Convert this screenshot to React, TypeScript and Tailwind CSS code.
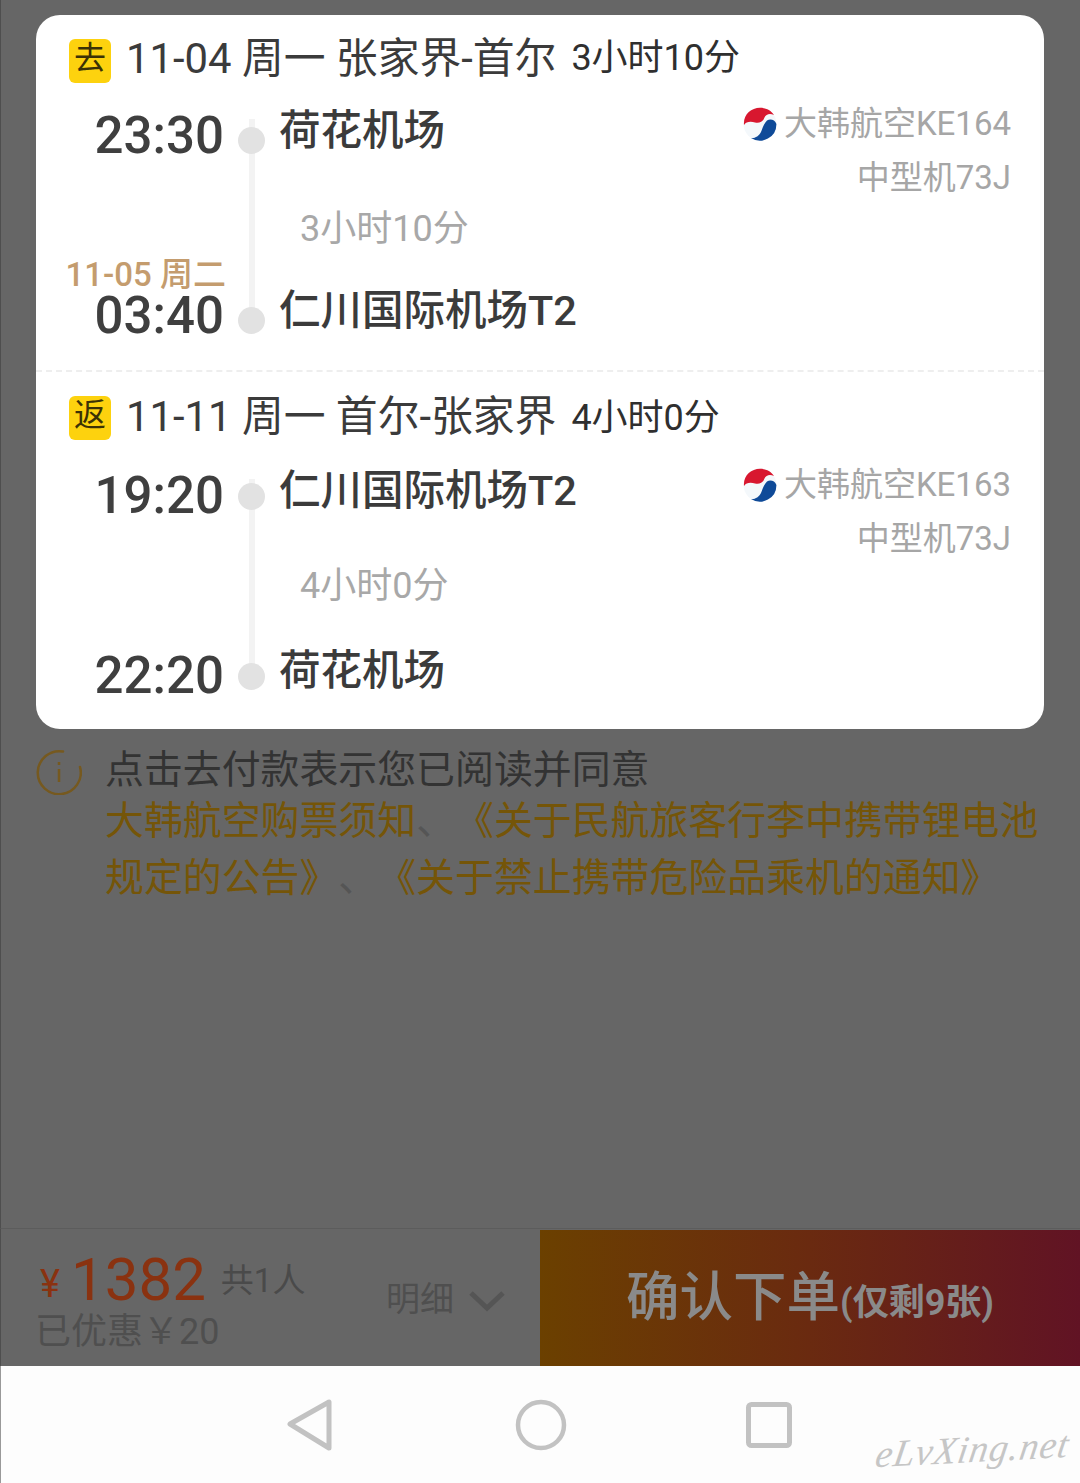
import React from "react";

function Logo() {
  return (
    <svg width="34" height="34" viewBox="0 0 34 34" className="mr-[7px] shrink-0">
      <circle cx="17" cy="17" r="16.5" fill="#f4f8fb" />
      <path d="M1 18 C0 8 8 0.8 17 0.8 C23 0.8 28 3 31 8 C27 6 23 7 21.5 10.5 C20 15 16 16.5 12 15.5 C7 14 3 15 1 18 Z" fill="#d8172f" />
      <path d="M33.4 17 A16.5 16.5 0 0 1 8 31 C12 31.5 16 29 18 25 C20 20 21 16.5 24 13.5 C27 11.5 32 12.5 33.4 17 Z" fill="#0f4a98" />
    </svg>
  );
}

type SegmentProps = {
  tag: string;
  head: string;
  headDuration: string;
  depart: string;
  arrive: string;
  from: string;
  to: string;
  duration: string;
  flight: string;
  nextDay?: string;
  rowGap: string;
  midPad: string;
  pad: string;
  bottom: string;
  dot: string;
  airTop: string;
  headShift: string;
  durShift: string;
};

function Dot({ shift }: { shift: string }) {
  return <div className={`relative z-10 h-[27px] w-[27px] rounded-full bg-[#e2e2e2] ${shift}`} />;
}

function Segment(p: SegmentProps) {
  return (
    <section className={`${p.pad} ${p.bottom}`}>
      <div className={`flex h-[44px] items-center ${p.rowGap}`}>
        <span className="ml-[33px] flex h-[44px] w-[42px] items-center justify-center rounded-[6px] bg-[#fdd20e] pb-[6px] text-[32px] text-[#3c3205]">
          {p.tag}
        </span>
        <span className={`ml-[15px] whitespace-nowrap text-[41.8px] leading-[44px] text-[#3b3b3b] ${p.headShift}`}>{p.head}</span>
        <span className={`ml-[15px] whitespace-nowrap text-[36px] leading-[44px] text-[#2f2f2f] ${p.durShift}`}>{p.headDuration}</span>
      </div>
      <div className="flex">
        <div className="relative flex-1">
          <div className="absolute bottom-[20px] left-[213px] top-[11px] w-[6px] bg-[#f3f3f3]" />
          <div className="flex h-[56px] items-center">
            <span className="w-[188px] pb-[2px] text-right text-[51px] font-medium leading-none text-[#3f3f3f]">{p.depart}</span>
            <div className="ml-[14px] w-[27px]"><Dot shift={p.dot} /></div>
            <span className="ml-[14px] whitespace-nowrap pb-[10px] text-[41.5px] font-medium leading-none text-[#3b3b3b]">{p.from}</span>
          </div>
          <div className="flex h-[124px]">
            <div className="flex w-[190px] flex-col justify-end">
              {p.nextDay && <span className="-mb-[1px] whitespace-nowrap text-right text-[33px] font-medium leading-[28px] text-[#c49c6e]">{p.nextDay}</span>}
            </div>
            <div className={`ml-[74px] flex items-center text-[36px] leading-none text-[#a8a8a8] ${p.midPad}`}>{p.duration}</div>
          </div>
          <div className="flex h-[56px] items-center">
            <span className="w-[188px] pb-[2px] text-right text-[51px] font-medium leading-none text-[#3f3f3f]">{p.arrive}</span>
            <div className="ml-[14px] w-[27px]"><Dot shift={p.dot} /></div>
            <span className="ml-[14px] whitespace-nowrap pb-[10px] text-[41.5px] font-medium leading-none text-[#3b3b3b]">{p.to}</span>
          </div>
        </div>
        <div className="flex flex-col items-end pr-[33px] text-[33px] leading-[54px] text-[#a6a6a6]">
          <div className={`flex items-center whitespace-nowrap ${p.airTop}`}>
            <Logo />
            {p.flight}
          </div>
          <div className="whitespace-nowrap">中型机73J</div>
        </div>
      </div>
    </section>
  );
}

export default function App() {
  return (
    <div className="flex h-[1483px] w-[1080px] flex-col overflow-hidden bg-[#666666] font-[Roboto,'Noto_Sans_CJK_SC',sans-serif]">
      <main className="flex-1 border-l border-[#4e4e4e] pl-[35px] pr-[36px] pt-[15px]">
        <div className="rounded-[24px] bg-white">
          <Segment
            tag="去"
            head="11-04 周一 张家界-首尔"
            headDuration="3小时10分"
            depart="23:30"
            arrive="03:40"
            from="荷花机场"
            to="仁川国际机场T2"
            duration="3小时10分"
            flight="大韩航空KE164"
            nextDay="11-05 周二"
            pad="pt-[24px]"
            rowGap="mb-[25px]"
            midPad="pt-[6px]"
            dot="translate-y-[4px]"
            airTop="-mt-[11px]"
            headShift="-translate-y-[2px]"
            durShift="-translate-y-[3px]"
            bottom="pb-[26px] border-b-2 border-dashed border-[#eeeeee]"
          />
          <Segment
            tag="返"
            head="11-11 周一 首尔-张家界"
            headDuration="4小时0分"
            depart="19:20"
            arrive="22:20"
            from="仁川国际机场T2"
            to="荷花机场"
            duration="4小时0分"
            flight="大韩航空KE163"
            pad="pt-[24px]"
            rowGap="mb-[28px]"
            midPad=""
            dot="translate-y-[0px]"
            airTop="-mt-[10px]"
            headShift="-translate-y-[1px]"
            durShift="translate-y-[0px]"
            bottom="pb-[25px]"
          />
        </div>
        <div className="mt-[12px] flex">
          <svg width="46" height="46" viewBox="0 0 46 46" className="mt-[8px] shrink-0" fill="none" stroke="#76591f" strokeWidth="2.5">
            <path d="M27 2.5 A21.5 21.5 0 1 0 44 18" strokeLinecap="round" />
            <line x1="23" y1="20" x2="23" y2="33" />
            <line x1="23" y1="13" x2="23" y2="16" />
          </svg>
          <div className="ml-[23px] whitespace-nowrap text-[38.9px] leading-[57px] text-[#755508] [text-spacing-trim:space-all]">
            <div className="-mb-[6px] text-[#333333]">点击去付款表示您已阅读并同意</div>
            <div>大韩航空购票须知<span className="text-[#555555]">、</span>《关于民航旅客行李中携带锂电池</div>
            <div>规定的公告》<span className="text-[#555555]">、</span>《关于禁止携带危险品乘机的通知》</div>
          </div>
        </div>
      </main>

      <footer className="flex h-[138px] shrink-0 border-l border-t border-l-[#4e4e4e] border-t-[#5c5c5c]">
        <div className="flex w-[539px] items-start pl-[35px]">
          <div className="w-[350px]">
            <div className="flex h-[86px] items-end text-[#8a3210]">
              <span className="mb-[12px] ml-[4px] text-[38px] leading-none">¥</span>
              <span className="ml-[11px] text-[60px] leading-[70px]">1382</span>
              <span className="mb-[18px] ml-[15px] text-[33px] leading-none text-[#4a4a4a]">共1人</span>
            </div>
            <div className="-ml-[1px] -mt-[6px] whitespace-nowrap text-[36px] leading-[46px] text-[#4f4f4f]">已优惠￥20</div>
          </div>
          <div className="mt-[50px] flex items-center text-[34px] leading-[40px] text-[#4f4f4f]">
            明细
            <svg width="38" height="22" viewBox="0 0 38 22" className="ml-[14px] mt-[3px]" fill="none" stroke="#555555" strokeWidth="5">
              <path d="M3 3 L19 18 L35 3" />
            </svg>
          </div>
        </div>
        <button className="mt-[1px] flex flex-1 items-center justify-center bg-[linear-gradient(90deg,#6b4000,#6a2a10_50%,#611324)] text-[#8a8a8a]">
          <span className="text-[53.5px] font-medium leading-none">确认下单</span>
          <span className="mt-[10px] whitespace-nowrap text-[36px] font-bold leading-none">(仅剩9张)</span>
        </button>
      </footer>

      <nav className="relative flex h-[117px] shrink-0 items-center border-l border-[#999999] bg-[#fdfdfd]">
        <div className="ml-[286px] flex items-center">
          <svg width="46" height="54" viewBox="0 0 46 54" fill="none" stroke="#c2c2c2" strokeWidth="5" strokeLinejoin="round">
            <path d="M42 4 V50 L3 26 Z" />
          </svg>
          <svg width="52" height="52" viewBox="0 0 52 52" className="ml-[182px]" fill="none" stroke="#c2c2c2" strokeWidth="4.5">
            <circle cx="26" cy="26" r="23" />
          </svg>
          <svg width="46" height="46" viewBox="0 0 46 46" className="ml-[179px]" fill="none" stroke="#c2c2c2" strokeWidth="5">
            <rect x="2.5" y="2.5" width="41" height="41" rx="3" />
          </svg>
        </div>
        <span className="absolute left-[875px] top-[64px] -rotate-3 -skew-x-12 whitespace-nowrap font-['Liberation_Serif',serif] text-[38px] italic leading-none tracking-[1px] text-[#c6c6c6]">
          eLvXing.net
        </span>
      </nav>
    </div>
  );
}
